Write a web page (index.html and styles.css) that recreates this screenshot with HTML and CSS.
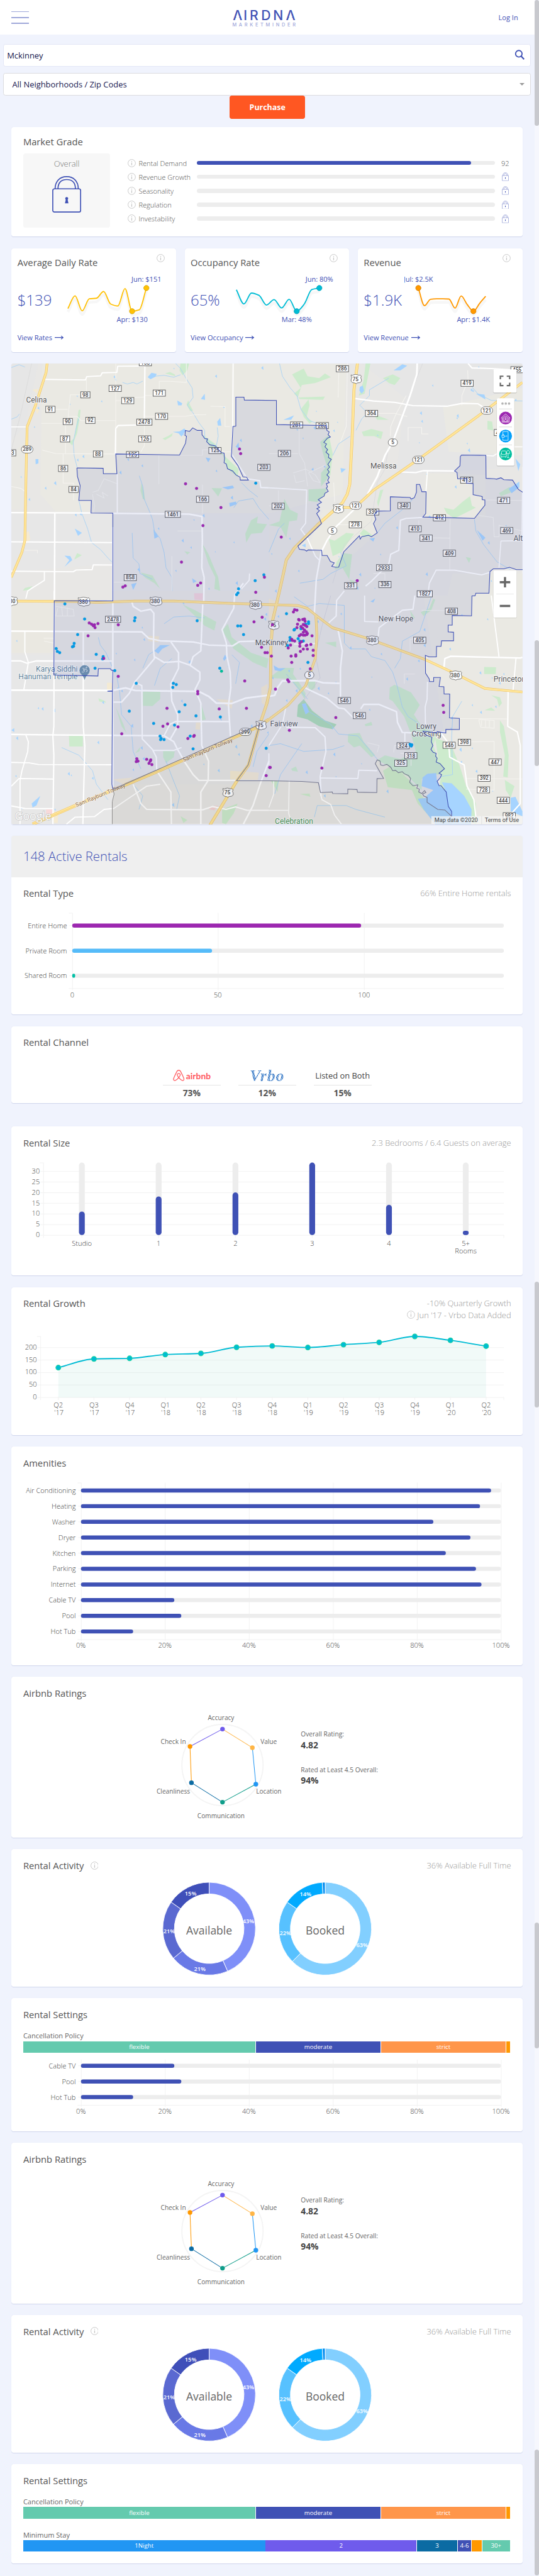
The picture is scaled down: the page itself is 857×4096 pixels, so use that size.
FILE: index.html
```html
<!DOCTYPE html>
<html lang="en">
<head>
<meta charset="utf-8">
<title>AirDNA MarketMinder</title>
<link rel="stylesheet" href="styles.css">
</head>
<body>
<svg class="defs" aria-hidden="true">
  <symbol id="info" viewBox="0 0 14 14"><circle cx="7" cy="7" r="6.4" fill="none" stroke="currentColor"/><path d="M7 6v4.6M7 3.2v1.5" stroke="currentColor" stroke-width="1.3"/></symbol>
  <symbol id="lock" viewBox="0 0 50 63"><g fill="none" stroke="currentColor" stroke-width="1.8"><rect x="1" y="22" width="48" height="40" rx="3"/><path d="M5 22C5 9 13 1 25 1s20 8 20 21M10 22c0-10 5-16 15-16s15 6 15 16"/></g><path d="M25 36a2.6 2.6 0 0 1 1.6 4.6L28 47h-6l1.400-6.400A2.600 2.600 0 0 1 25 36z" fill="currentColor"/></symbol>
  <symbol id="lock-sm" viewBox="0 0 12 15"><path d="M.6 5.600h10.800v8.800H.6zM1.700 5.600C1.700 2.500 3.300.7 6 .7s4.300 1.800 4.300 4.900M3.400 5.600C3.400 3.500 4.300 2.300 6 2.300s2.600 1.200 2.600 3.300" fill="none" stroke="currentColor" stroke-width=".9"/><path d="M6 8.800v2.400" stroke="#3f51b5" stroke-width="1.200"/></symbol>
  <symbol id="arrow" viewBox="0 0 16 8"><path d="M0 4h14M11 1.200l3.500 2.800L11 6.800" fill="none" stroke="currentColor" stroke-width="1.300"/></symbol>
</svg>
<div class="page">
  <header class="topbar">
    <div class="burger"><i></i><i></i><i></i></div>
    <svg class="logo" viewBox="0 0 112 32" width="112" height="32">
      <text x="10.700 24 38.800 59.500 80.500 102" y="20.500" class="logo-main">AIRDNA</text>
      <path d="M8 13.200h5.400v4.600H8zM99.300 13.200h5.400v4.600h-5.400z" fill="#fff"/>
      <text x="1.500" y="31.800" class="logo-sub" textLength="109">MARKETMINDER</text>
    </svg>
    <a class="login">Log In</a>
  </header>

  <div class="search"><span>Mckinney</span>
    <svg width="18" height="18" viewBox="0 0 18 18"><circle cx="7.500" cy="7" r="5.600" fill="none" stroke="#3f51b5" stroke-width="2"/><path d="M11.500 11l5 5.500" stroke="#3f51b5" stroke-width="2.400"/></svg>
  </div>
  <div class="select"><span>All Neighborhoods / Zip Codes</span><i class="caret"></i></div>
  <button class="purchase">Purchase</button>

  <main class="cards">
    <section class="card grade">
      <h2>Market Grade</h2>
      <div class="grade-body">
        <div class="overall"><span>Overall</span><svg width="50" height="63"><use href="#lock"/></svg></div>
        <div class="grade-rows">
          <div class="grow"><svg class="inf"><use href="#info"/></svg><span>Rental Demand</span><div class="track"><b class="fill92"></b></div><em>92</em></div>
          <div class="grow"><svg class="inf"><use href="#info"/></svg><span>Revenue Growth</span><div class="track"></div><svg class="lk"><use href="#lock-sm"/></svg></div>
          <div class="grow"><svg class="inf"><use href="#info"/></svg><span>Seasonality</span><div class="track"></div><svg class="lk"><use href="#lock-sm"/></svg></div>
          <div class="grow"><svg class="inf"><use href="#info"/></svg><span>Regulation</span><div class="track"></div><svg class="lk"><use href="#lock-sm"/></svg></div>
          <div class="grow"><svg class="inf"><use href="#info"/></svg><span>Investability</span><div class="track"></div><svg class="lk"><use href="#lock-sm"/></svg></div>
        </div>
      </div>
    </section>

    <div class="stats">
      <section class="card stat"><div class="stat-head"><h2>Average Daily Rate</h2><svg class="inf"><use href="#info"/></svg></div>
        <div class="stat-body"><strong>$139</strong><svg class="spark" id="spark1"></svg></div>
        <a>View Rates <svg width="16" height="8"><use href="#arrow"/></svg></a></section>
      <section class="card stat"><div class="stat-head"><h2>Occupancy Rate</h2><svg class="inf"><use href="#info"/></svg></div>
        <div class="stat-body"><strong>65%</strong><svg class="spark" id="spark2"></svg></div>
        <a>View Occupancy <svg width="16" height="8"><use href="#arrow"/></svg></a></section>
      <section class="card stat"><div class="stat-head"><h2>Revenue</h2><svg class="inf"><use href="#info"/></svg></div>
        <div class="stat-body"><strong>$1.9K</strong><svg class="spark" id="spark3"></svg></div>
        <a>View Revenue <svg width="16" height="8"><use href="#arrow"/></svg></a></section>
    </div>

    <section class="card map"><svg id="map" viewBox="60 24 2643 2382" width="881" height="794"></svg></section>

    <section class="card">
      <div class="banner">148 Active Rentals</div>
      <div class="head"><h2>Rental Type</h2><p>66% Entire Home rentals</p></div>
      <svg id="type" viewBox="20 1569 881 181" width="881" height="181"></svg>
    </section>

    <section class="card channel">
      <div class="head"><h2>Rental Channel</h2></div>
      <div class="channels">
        <div><span class="brand"><svg width="20" height="21" viewBox="0 0 20 21"><path d="M10 13.500c-2-2.400-2.900-4-2.500-5.500.7-2.300 4.300-2.300 5 0 .4 1.500-.5 3.100-2.500 5.500-4.500 6-9.300 6.500-9 2.300.1-1.300 5-11.500 6.200-13.500C8.400.3 11.600.3 12.800 2.300 14 4.300 18.900 14.500 19 15.800c.3 4.200-4.500 3.700-9-2.300z" fill="none" stroke="#ff5a5f" stroke-width="1.400"/></svg><b class="airbnb">airbnb</b></span><strong>73%</strong></div>
        <div><span class="brand"><b class="vrbo">Vrbo</b></span><strong>12%</strong></div>
        <div><span class="brand">Listed on Both</span><strong>15%</strong></div>
      </div>
    </section>

    <section class="card">
      <div class="head"><h2>Rental Size</h2><p>2.3 Bedrooms / 6.4 Guests on average</p></div>
      <svg id="size" viewBox="20 1999 881 201" width="881" height="201"></svg>
    </section>

    <section class="card">
      <div class="head"><h2>Rental Growth</h2><p class="two">-10% Quarterly Growth<br><svg class="inf"><use href="#info"/></svg> Jun '17 - Vrbo Data Added</p></div>
      <svg id="growth" viewBox="20 2276 881 199" width="881" height="199"></svg>
    </section>

    <section class="card">
      <div class="head"><h2>Amenities</h2></div>
      <svg id="amenities" viewBox="20 2551 881 321" width="881" height="321"></svg>
    </section>

    <section class="card"><div class="head"><h2>Airbnb Ratings</h2></div><svg class="ratings" viewBox="20 2948 881 221" width="881" height="221"></svg></section>
    <section class="card"><div class="head"><h2>Rental Activity <svg class="inf"><use href="#info"/></svg></h2><p>36% Available Full Time</p></div><svg class="activity" viewBox="20 3245 881 181" width="881" height="181"></svg></section>

    <section class="card settings">
      <div class="head"><h2>Rental Settings</h2></div>
      <label>Cancellation Policy</label>
      <div class="stack policy"><i class="green">flexible</i><i class="blue">moderate</i><i class="orange">strict</i><i class="amber"></i></div>
      <svg id="partial" viewBox="20 3540 881 135" width="881" height="135"></svg>
    </section>

    <section class="card"><div class="head"><h2>Airbnb Ratings</h2></div><svg class="ratings" viewBox="20 2948 881 221" width="881" height="221"></svg></section>
    <section class="card"><div class="head"><h2>Rental Activity <svg class="inf"><use href="#info"/></svg></h2><p>36% Available Full Time</p></div><svg class="activity" viewBox="20 3245 881 181" width="881" height="181"></svg></section>

    <section class="card settings last">
      <div class="head"><h2>Rental Settings</h2></div>
      <label>Cancellation Policy</label>
      <div class="stack policy"><i class="green">flexible</i><i class="blue">moderate</i><i class="orange">strict</i><i class="amber"></i></div>
      <label class="second">Minimum Stay</label>
      <div class="stack stay"><i class="sky">1Night</i><i class="violet">2</i><i class="teal">3</i><i class="blue">4-6</i><i class="amber"></i><i class="green">30+</i></div>
    </section>
  </main>
  <aside class="rail"><i class="t1"></i><i class="t2"></i><i class="t3"></i><i class="t4"></i><i class="t5"></i></aside>
</div>
<script src="script.js"></script>
</body>
</html>
```
FILE: styles.css
```css
* { box-sizing: border-box; }
html { background: #f0f3fd; overflow: hidden; }
body { margin: 0; zoom: .9224; font-family: "Open Sans", sans-serif; color: #555; }
.defs { position: absolute; width: 0; height: 0; }
.page { position: relative; width: 929px; height: 4440px; overflow: hidden; background: #f0f3fd; }
svg { display: block; }
h2 { margin: 0; font-size: 16px; font-weight: 400; line-height: 22px; color: #555; }
i, em { font-style: normal; }

.topbar { width: 921px; height: 60px; background: #fff; display: flex; justify-content: space-between; align-items: center; padding: 0 28px 0 20px; }
.burger { width: 30px; display: grid; gap: 8px; }
.burger i { height: 2px; background: #9fa8da; }
.logo { margin-left: 1px; overflow: visible; }
.logo-main { font: 500 23px Inter, sans-serif; fill: #3f51b5; text-anchor: middle; }
.logo-sub { font: 500 8px Inter, sans-serif; fill: #9fa8da; }
.login { font-size: 12px; color: #3f51b5; }

.search, .select { width: 910px; height: 39px; margin-left: 5px; background: #fff; border: 1px solid #e3e6f6; border-radius: 4px; display: flex; align-items: center; justify-content: space-between; color: #16164f; font-size: 14px; font-weight: 500; }
.search { margin-top: 15.500px; padding: 0 9px 0 6px; }
.select { margin-top: 11px; padding: 0 10px 0 15px; border-color: #dcdcdf; }
.caret { border: 5px solid transparent; border-top: 5px solid #999; border-bottom: 0; }
.purchase { display: block; width: 130px; height: 40px; margin: 0 0 0 396px; border: 0; border-radius: 4px; background: #ff5722; color: #fff; font: 700 13.500px "Open Sans", sans-serif; }

.cards { margin: 14.500px 0 0 20px; width: 881px; display: flex; flex-direction: column; gap: 20px; }
.card { background: #fff; border-radius: 4px; box-shadow: 0 1px 1px #cfd5ec; }
.inf { width: 14px; height: 14px; color: #c4c4c4; flex: none; }

.grade { height: 189px; padding: 14px 20px; }
.grade-body { display: flex; margin-top: 10px; }
.overall { width: 150px; height: 127px; background: #f7f7f7; border-radius: 4px; display: flex; flex-direction: column; align-items: center; gap: 12px; padding-top: 7px; font-size: 14px; font-weight: 300; line-height: 20px; color: #777; }
.overall svg { color: #3f51b5; }
.grade-rows { padding: 4px 0 0 30px; width: 691px; }
.grow { height: 24px; display: flex; align-items: center; font-size: 12px; font-weight: 300; color: #555; }
.grow span { width: 100px; margin-left: 5px; }
.track { width: 514px; height: 7px; border-radius: 4px; background: #ededed; }
.track b { display: block; height: 7px; border-radius: 4px; background: #3f51b5; }
.fill92 { width: 92%; }
.grow em { margin-left: 11px; }
.lk { width: 12px; height: 15px; margin-left: 12px; color: #9fa8da; }

.stats { display: grid; grid-template-columns: repeat(3, 283.500px); gap: 15px; }
.stat { height: 179px; padding: 10px 10px 0; }
.stat-head { display: flex; justify-content: space-between; height: 28px; }
.stat-head h2 { padding-top: 3px; }
.stat-head .inf { margin-right: 10px; }
.stat-body { display: flex; height: 104px; }
.stat-body strong { font-size: 26px; font-weight: 300; color: #3f51b5; line-height: 36px; padding-top: 33px; width: 70px; white-space: nowrap; }
.spark { width: 190px; height: 104px; flex: none; }
.stat a { display: flex; align-items: center; gap: 4px; height: 24px; font-size: 12px; color: #3f51b5; }

.map { height: 794px; overflow: hidden; }
.banner { height: 71px; padding-left: 20px; line-height: 71px; font-size: 22px; font-weight: 300; color: #3f51b5; background: #efefef; border-radius: 4px 4px 0 0; }
.head { height: 56px; padding: 17px 20px 0; display: flex; justify-content: space-between; align-items: flex-start; }
.head h2 { display: flex; align-items: center; gap: 11px; }
.head p { margin: 0; font-size: 14px; font-weight: 300; color: #999; line-height: 22px; text-align: right; }
.head .two { line-height: 20px; padding-top: 1px; }
.two .inf { display: inline-block; vertical-align: -1px; }

.channel { height: 133px; margin-bottom: 20px; }
.channels { display: grid; grid-template-columns: repeat(3, 100px); gap: 30px; justify-content: center; padding-top: 14px; }
.channels div { text-align: center; }
.brand { display: flex; align-items: center; justify-content: center; gap: 3px; height: 32px; font-size: 14px; color: #444; border-bottom: 1px solid #e5e5e5; white-space: nowrap; }
.airbnb { font: 700 15px Lato, sans-serif; color: #ff5a5f; }
.vrbo { padding: 0 3px; font: italic 700 28px/30px "Liberation Serif", serif; letter-spacing: 1px; color: transparent; background: repeating-linear-gradient(65deg, #3c74bd 0 1.400px, #a4cdf3 1.400px 2.600px); -webkit-background-clip: text; background-clip: text; }
.channels strong { display: block; font-size: 15px; font-weight: 700; line-height: 26px; }

.settings { height: 229px; }
.settings.last { height: 171px; }
label { display: block; margin-left: 20px; height: 18px; font-size: 12px; line-height: 18px; color: #666; }
label.second { margin-top: 20px; }
.stack { display: grid; gap: 1px; width: 839px; height: 20px; margin-left: 20px; }
.policy { grid-template-columns: 400px 215px 214.500px 6.500px; }
.stay { grid-template-columns: 417px 260px 69px 23.500px 17px 47.500px; margin-top: -1px; }
.stack i { display: flex; align-items: center; justify-content: center; font-size: 10.500px; color: #fff; }
.green { background: #64caae; }
.blue { background: #3f51b5; }
.orange { background: #ff964a; }
.amber { background: #ff9800; }
.sky { background: #2196f3; }
.violet { background: #6f5bec; }
.teal { background: #0b6ba3; }

.rail { position: absolute; left: 921px; top: 0; width: 8px; height: 4440px; background: #f6f7fd; }
.rail i { position: absolute; left: 0; width: 8px; height: 217px; border-radius: 4px; background: #c8c9ce; }
.rail .t1 { top: 0; }
.rail .t2 { top: 1104px; }
.rail .t3 { top: 2209px; }
.rail .t4 { top: 3314px; }
.rail .t5 { top: 4223px; }

.lbl { font: 300 12px "Open Sans", sans-serif; fill: #444; }
.small { font: 400 11px "Open Sans", sans-serif; fill: #666; }
.big { font: 700 15px "Open Sans", sans-serif; fill: #444; }
.hole { font: 400 19px "Open Sans", sans-serif; fill: #666; }
.pct { font: 600 10px "Open Sans", sans-serif; fill: #fff; }
.tip { font: 400 12px "Open Sans", sans-serif; fill: #3f51b5; }
.grid { stroke: #f1f1f1; stroke-width: 1; }
.road-tag { font: 500 27px Roboto, sans-serif; fill: #444; }
.place { font: 400 39px Roboto, sans-serif; fill: #555; stroke: #fff; stroke-width: 5; paint-order: stroke; stroke-linejoin: round; }
.place.poi { fill: #5d7f99; }
.place.park { fill: #4b9560; }
.place.toll { font-size: 29px; fill: #8b6331; stroke-width: 4; }
.legal { font: 400 30px Roboto, sans-serif; fill: #444; }
.google { font: 500 58px "Open Sans", sans-serif; fill: #fff; stroke: #aaa; stroke-width: 3; paint-order: stroke; letter-spacing: -2px; }
```
FILE: script.js
```js
const $ = s => document.querySelector(s);
const r1 = n => Math.round(n * 10) / 10;
const text = (x, y, s, anchor = 'middle', cls = 'lbl', size = 12) =>
  `<text x="${x}" y="${r1(y + size * 0.36)}" text-anchor="${anchor}" class="${cls}">${s}</text>`;
const line = (x1, y1, x2, y2) => `<path class="grid" d="M${x1} ${y1}L${x2} ${y2}"/>`;
const bar = (x, y, w, h, fill) => `<rect x="${x}" y="${y}" width="${w}" height="${h}" rx="${Math.min(w, h) / 2}" fill="${fill}"/>`;

// Monotone cubic through a list of points
function curve(p) {
  const n = p.length, m = [], d = [];
  for (let i = 0; i < n - 1; i++) m.push((p[i + 1][1] - p[i][1]) / (p[i + 1][0] - p[i][0]));
  for (let i = 0; i < n; i++) {
    if (i === 0) d.push(m[0]);
    else if (i === n - 1) d.push(m[n - 2]);
    else d.push(m[i - 1] * m[i] <= 0 ? 0 : 2 * m[i - 1] * m[i] / (m[i - 1] + m[i]));
  }
  let s = `M${r1(p[0][0])} ${r1(p[0][1])}`;
  for (let i = 0; i < n - 1; i++) {
    const h = (p[i + 1][0] - p[i][0]) / 3;
    s += `C${r1(p[i][0] + h)} ${r1(p[i][1] + d[i] * h)} ${r1(p[i + 1][0] - h)} ${r1(p[i + 1][1] - d[i + 1] * h)} ${r1(p[i + 1][0])} ${r1(p[i + 1][1])}`;
  }
  return s;
}

// Sparklines
function spark(id, left, color, rim, ys, x0, step, hi, lo, hiText, loText) {
  const el = $(id);
  el.setAttribute('viewBox', `${left} 467 190 104`);
  const pts = ys.map((y, i) => [x0 + i * step, 400 + y / 3]);
  const d = curve(pts);
  const dot = i => `<circle cx="${pts[i][0]}" cy="${pts[i][1]}" r="4.500" fill="${color}" stroke="${rim}"/>`;
  el.innerHTML = `<path d="${d}" transform="translate(0 6)" fill="none" stroke="#000" stroke-opacity=".03" stroke-width="5"/>
    <path d="${d}" fill="none" stroke="${color}" stroke-width="2"/>${dot(hi)}${dot(lo)}` +
    text(pts[hi][0], 482, hiText, 'middle', 'tip') + text(pts[lo][0], 552, loText, 'middle', 'tip');
}
spark('#spark1', 100, '#ffc107', '#dba800', [398, 332, 410, 348, 345, 310, 375, 385, 295, 412, 405, 292], 117.3, 12.3, 11, 9, 'Jun: $151', 'Apr: $130');
spark('#spark2', 398.5, '#00bcd4', '#00a3bb', [301, 374, 318, 330, 380, 352, 395, 350, 412, 375, 300, 292], 407, 13, 11, 8, 'Jun: 80%', 'Mar: 48%');
spark('#spark3', 697, '#ff9800', '#db8200', [292, 383, 350, 348, 348, 349, 396, 333, 378, 412, 372, 335], 721, 10.55, 0, 9, 'Jul: $2.5K', 'Apr: $1.4K');

// Horizontal bars
function hbars(id, o) {
  let s = '';
  o.ticks.forEach(([x, t]) => { s += line(x + .5, o.top, x + .5, o.bottom + 3) + text(x, o.axis, t); });
  s += line(o.x - 6, o.bottom + .5, o.right, o.bottom + .5);
  if (o.cap) s += line(o.x - 6, o.top + .5, o.x, o.top + .5);
  o.rows.forEach(([label, end, fill], i) => {
    const y = o.y + i * o.step;
    s += line(o.x - 5, y, o.x, y) + bar(o.x, y - 3.5, o.right - o.x, 7, '#ededed') + bar(o.x, y - 3.5, end - o.x, 7, fill || '#3f51b5') +
      text(o.labelX, y, label, 'end');
  });
  $(id).innerHTML = s;
}
hbars('#type', { x: 125, right: 869, top: 1575, bottom: 1705, axis: 1716, y: 1597, step: 43.2, labelX: 116, cap: true,
  ticks: [[125, '0'], [376, '50'], [628, '100']],
  rows: [['Entire Home', 623, '#9c27b0'], ['Private Room', 366, '#55bbf9'], ['Shared Room', 130, '#00bfa5']] });
const pctTicks = [0, 20, 40, 60, 80, 100].map((v, i) => [140 + i * 144.8, v + '%']);
hbars('#amenities', { x: 140, right: 864, top: 2557, bottom: 2827, axis: 2837.5, y: 2570.5, step: 27, labelX: 131, cap: true, ticks: pctTicks,
  rows: [['Air Conditioning', 847], ['Heating', 828], ['Washer', 747.5], ['Dryer', 811.5], ['Kitchen', 769], ['Parking', 821], ['Internet', 830.5], ['Cable TV', 301], ['Pool', 313], ['Hot Tub', 230]] });
hbars('#partial', { x: 140, right: 864, top: 3552, bottom: 3630, axis: 3640.5, y: 3562.5, step: 27, labelX: 131, ticks: pctTicks,
  rows: [['Cable TV', 301], ['Pool', 313], ['Hot Tub', 230]] });

// Rental size columns
(() => {
  let s = line(75.5, 2005, 75.5, 2135) + line(69, 2005.5, 75, 2005.5) + line(869, 2130, 869, 2135);
  for (let i = 0; i < 7; i++) s += line(70, r1(2130.3 - i * 18.35), 869, r1(2130.3 - i * 18.35)) + text(69, 2129.5 - i * 18.35, i * 5, 'end');
  [['Studio', 2089.5], ['1', 2063.5], ['2', 2056.5], ['3', 2005], ['4', 2078], ['5+', 2122.5]].forEach(([t, top], i) => {
    const x = 141.6 + i * 132.35;
    s += line(x, 2130, x, 2135) + bar(x - 5, 2005, 10, 125, '#ededed') + bar(x - 5, top, 10, 2130 - top, '#3f51b5') + text(x, 2144, t);
  });
  $('#size').innerHTML = s + text(803.4, 2157, 'Rooms');
})();

// Rental growth line
(() => {
  const ys = [2359, 2344, 2343, 2336.5, 2334.5, 2324, 2321.7, 2324.3, 2319.5, 2315.5, 2305.3, 2312, 2322];
  const pts = ys.map((y, i) => [101 + i * 61.45, y]);
  const q = ["Q2 '17", "Q3 '17", "Q4 '17", "Q1 '18", "Q2 '18", "Q3 '18", "Q4 '18", "Q1 '19", "Q2 '19", "Q3 '19", "Q4 '19", "Q1 '20", "Q2 '20"];
  let s = line(70.5, 2305, 70.5, 2415) + line(64, 2305.5, 70, 2305.5) + line(869, 2410, 869, 2415);
  for (let i = 0; i < 5; i++) s += line(65, 2410.5 - i * 21.5, 869, 2410.5 - i * 21.5) + text(64, 2409.5 - i * 21.5, i * 50, 'end');
  const d = curve(pts);
  s += `<path d="${d}L838.4 2410.5L101 2410.5z" fill="#64caae" fill-opacity=".09"/><path d="${d}" fill="none" stroke="#00bcd4" stroke-width="2"/>`;
  pts.forEach(([x, y], i) => {
    const [a, b] = q[i].split(' ');
    s += line(x, 2410, x, 2415) + `<circle cx="${x}" cy="${y}" r="4.2" fill="#00bcd4" stroke="#1dd1a1" stroke-width="1.3"/>` + text(x, 2423, a) + text(x + 1, 2436, b);
  });
  $('#growth').innerHTML = s;
})();

// Rating radar
(() => {
  const p = [[384, 2982, '#6f5bec'], [435.5, 3014, '#ffb545'], [441.5, 3077, '#2196f3'], [384, 3108, '#0f9d8a'], [330.5, 3074.5, '#0b6ba3'], [328, 3012, '#ff9800']];
  const edge = ['#ffb545', '#2196f3', '#0f9d8a', '#0b6ba3', '#ff9800', '#6f5bec'];
  let s = '<circle cx="384" cy="3044" r="70" fill="none" stroke="#f4f4f4" stroke-width="2"/>';
  p.forEach((a, i) => { const b = p[(i + 1) % 6]; s += `<path d="M${a[0]} ${a[1]}L${b[0]} ${b[1]}" stroke="${edge[i]}" stroke-width="1.1"/>`; });
  p.forEach(a => { s += `<circle cx="${a[0]}" cy="${a[1]}" r="4" fill="${a[2]}"/>`; });
  [[381.5, 2962, 'Accuracy', 'middle'], [449.5, 3004, 'Value', 'start'], [442, 3089, 'Location', 'start'], [381.5, 3132, 'Communication', 'middle'], [328, 3089, 'Cleanliness', 'end'], [321, 3004, 'Check In', 'end'],
    [519, 2991, 'Overall Rating:', 'start'], [519, 3052, 'Rated at Least 4.5 Overall:', 'start']].forEach(a => { s += text(a[0], a[1], a[2], a[3], 'small', 11); });
  s += text(519, 3009, '4.82', 'start', 'big', 16) + text(519, 3070, '94%', 'start', 'big', 16);
  document.querySelectorAll('.ratings').forEach(e => { e.innerHTML = s; });
})();

// Donuts
(() => {
  const cy = 3326;
  const donut = (cx, name, parts) => {
    let a = 0, s = '';
    const at = (r, t) => `${r1(cx + r * Math.sin(t))} ${r1(cy - r * Math.cos(t))}`;
    parts.forEach(([v, fill, show]) => {
      const b = a + v / 100 * 2 * Math.PI, big = v > 50 ? 1 : 0, m = (a + b) / 2;
      s += `<path d="M${at(80, a)}A80 80 0 ${big} 1 ${at(80, b)}L${at(60, b)}A60 60 0 ${big} 0 ${at(60, a)}z" fill="${fill}" stroke="#fff"/>`;
      if (show) s += text(r1(cx + 69 * Math.sin(m)), cy - 70 * Math.cos(m) + 1.5, show, 'middle', 'pct', 10);
      a = b;
    });
    return s + text(cx, cy + 3, name, 'middle', 'hole', 19);
  };
  const s = donut(361, 'Available', [[43.5, '#7f8ff8', '43%'], [20.5, '#6979e6', '21%'], [20.7, '#5a69d1', '21%'], [15.3, '#3f4fb9', '15%']]) +
    donut(561, 'Booked', [[62.5, '#82cfff', '63%'], [22.2, '#57c1ff', '22%'], [14.3, '#00aaff', '14%'], [1, '#0a8ff0', '']]);
  document.querySelectorAll('.activity').forEach(e => { e.innerHTML = s; });
})();

// Map, drawn as four tiles (nw, ne, sw, se) that share one canvas
(() => {
  const tile = { nw: [0, 0], ne: [1392, 0], sw: [0, 1200], se: [1392, 1200] };
  const pts = (t, list) => list.trim().split(/\s+/).map(p => { const [x, y] = p.split(',').map(Number); return (x + tile[t][0]) + ' ' + (y + tile[t][1]); });
  const path = (t, list) => 'M' + pts(t, list).join('L');
  const stroke = (t, list, color, w) => `<path d="${path(t, list)}" fill="none" stroke="${color}" stroke-width="${w}" stroke-linejoin="round"/>`;
  const area = (t, list, color) => `<path d="${path(t, list)}Z" fill="${color}"/>`;
  let s = '<rect x="60" y="24" width="2643" height="2382" fill="#e8e7e5"/>';

  // Terrain
  [['nw', '220,24 1392,24 1392,800 585,790 290,790 210,700 215,300', '#eae9e3'], ['nw', '60,500 130,420 135,780 60,780', '#e9e8e3'], ['nw', '60,24 200,24 130,350 60,420', '#e6e6e6'],
    ['ne', '0,24 400,24 380,700 0,800', '#eae9e3'], ['ne', '480,24 1311,24 1311,560 660,600 700,200', '#e6e6e6'], ['ne', '900,250 1311,150 1311,500 930,480', '#eae9e3'], ['ne', '810,590 1120,600 1120,820 800,820', '#eae9e3'], ['ne', '280,780 560,780 540,920 360,1080 200,990', '#eae9e3'],
    ['nw', '585,800 1392,800 1392,1200 585,1200', '#e7e7e7'], ['nw', '60,800 585,800 585,1060 60,1100', '#e7e7e7'], ['sw', '60,50 280,50 280,320 60,320', '#eae8e1'], ['sw', '60,330 580,330 580,2400 60,2400', '#e7e7e7'], ['sw', '585,50 1392,60 1392,1000 585,1000', '#e6e6e6'],
    ['se', '800,24 1311,24 1311,1206 950,1206 900,700', '#eae9e4'], ['se', '950,-90 1311,-90 1311,330 850,330', '#eae9e3']].forEach(a => { s += area(...a); });

  // Parks
  const g = '#cdebcd';
  [['nw', '935,24 980,24 970,60 945,85 930,60'], ['nw', '855,75 880,68 905,80 908,90 880,82'], ['nw', '966,235 975,215 985,240 1000,268 985,270'], ['nw', '842,412 870,400 895,383 890,400 855,420'], ['nw', '408,265 418,262 415,300 400,385 375,448 360,432 385,410'], ['nw', '385,1038 400,1005 425,1015 400,1030'],
    ['nw', '1046,390 1115,440 1160,500 1235,570 1230,610 1175,565 1155,500 1090,455'], ['nw', '733,640 745,680 752,730 740,725 728,680'], ['nw', '1095,668 1150,670 1130,712'], ['nw', '1300,835 1335,815 1330,850 1382,855 1355,900 1300,905 1275,950 1270,905'], ['nw', '955,995 985,1000 970,1012'], ['nw', '1045,950 1080,1010 1100,1060 1130,1130 1140,1200 1110,1190 1115,1130 1080,1060'],
    ['nw', '730,1105 790,1120 830,1190 800,1160 750,1130'], ['nw', '130,1185 170,1175 150,1195 120,1198'],
    ['ne', '120,80 180,50 200,90 260,100 290,75 320,95 240,125 170,135 150,200 290,195 280,212 160,208 130,180 165,150'], ['ne', '165,260 205,210 210,240 195,300 225,325 210,335 180,300'], ['ne', '500,24 525,24 495,180 465,190 490,110'], ['ne', '590,100 640,80 680,100 650,135 620,125'], ['ne', '480,378 530,362 590,378 580,415 545,400 490,400'], ['ne', '540,285 620,315 560,315'], ['ne', '265,430 310,395 330,490 318,600 270,660 270,590 300,555 280,490'],
    ['ne', '205,675 300,670 290,700 250,740 205,735'], ['ne', '80,725 110,780 150,800 145,835 105,840 90,925 60,870 0,860 55,840'], ['ne', '575,680 592,675 565,765 560,740'], ['ne', '905,770 955,780 1000,740 1040,710 1050,760 1070,770 1010,800 960,825 920,800'], ['ne', '310,930 340,940 400,900 440,905 375,1000 330,1020'], ['ne', '385,1005 430,1010 415,1140 445,1150 430,1165 380,1080 340,1090 350,1050'], ['ne', '1130,320 1155,325 1160,370 1130,365'], ['ne', '1190,695 1240,665 1265,665 1255,690 1200,710'], ['ne', '1018,1025 1045,1030 1035,1055'], ['ne', '470,905 490,880 540,915 490,920'],
    ['sw', '741,520 830,522 830,560 790,596 741,594'], ['sw', '358,750 430,750 430,805 360,805'], ['sw', '845,825 905,830 900,860 860,890 845,860'], ['sw', '1150,205 1180,170 1200,240 1300,320 1390,350 1380,400 1310,370 1210,300'], ['sw', '945,70 1010,100 1120,160 1110,205 1060,180 1000,120'], ['sw', '600,600 640,690 655,735 630,700'], ['sw', '1042,585 1066,665 1045,670'], ['sw', '1150,1130 1230,1100 1210,1150 1170,1206 1150,1200'], ['sw', '510,555 545,570 550,578 515,572'], ['sw', '935,1165 970,1185 950,1200'], ['sw', '700,840 728,806 722,830'],
    ['se', '625,500 650,485 735,525 780,590 750,640 790,700 870,740 850,800 880,880 905,920 880,950 820,945 790,975 790,1030 720,960 560,875 600,850 680,870 760,830 735,740 700,650 640,570 622,560'], ['se', '860,760 940,790 985,900 1020,1010 1070,1100 1070,1206 870,1100 890,960'], ['se', '640,900 750,1000 820,1100 830,1166 770,1100 740,1030 615,1015 590,930'],
    ['se', '410,740 470,735 490,780 550,850 530,860 470,800 440,810 408,780'], ['se', '70,398 130,398 125,430 160,480 190,530 185,560 160,520 110,455 0,450'], ['se', '190,460 240,465 240,500 215,520'], ['se', '290,268 348,262 348,292'], ['se', '495,690 530,677 535,695 500,700'], ['se', '1113,393 1175,395 1173,430 1113,430'], ['se', '1150,540 1195,550 1205,580 1190,600 1180,560'], ['se', '1195,670 1215,700 1240,850 1235,965 1212,960 1220,850 1195,730'], ['se', '1220,978 1270,1010 1250,1070 1225,1030'], ['se', '1115,617 1150,603 1170,620'], ['se', '115,920 140,908 150,935 120,930'], ['se', '730,100 755,140 740,145'], ['se', '785,110 830,90 850,40 860,45 840,100 800,130'], ['se', '160,1050 210,1048 215,1065'], ['se', '10,980 50,985 45,1040']].forEach(([t, l]) => { s += area(t, l, g); });
  s += area('se', '180,560 225,620 290,670 350,690 330,715 260,700 200,665 145,650 150,590', '#aedcb8');

  // Commercial blocks
  [['nw', '135,900 150,890 158,935 130,960'], ['nw', '170,160 200,155 195,180'], ['nw', '180,260 205,260 195,285'], ['sw', '555,475 583,475 583,515 555,515'], ['sw', '760,232 825,235 820,265 770,260'], ['sw', '1192,930 1340,940 1335,978 1192,975'], ['sw', '588,975 690,965 640,1000'], ['sw', '1352,500 1385,480 1385,600 1355,580'], ['sw', '1015,680 1040,680 1035,718 1012,715'], ['sw', '1120,560 1205,565 1200,610'], ['se', '0,40 50,60 20,70 25,150 0,150'], ['sw', '275,1145 303,1140 300,1200 280,1200']].forEach(([t, l]) => { s += area(t, l, '#f4ead3'); });
  s += area('sw', '240,1130 273,1130 272,1165 240,1160', '#f8d9d9') + area('sw', '1005,12 1050,12 1050,48 1007,45', '#f1d3dc') + area('sw', '1085,1115 1130,1110 1110,1135 1085,1130', '#f4d4d4');

  // Water
  const w = '#a6d4ff';
  [['nw', '895,378 930,375 955,360 962,370 940,402 925,385'], ['nw', '765,95 785,72 812,78 805,92 780,105'], ['nw', '1125,325 1140,305 1146,345 1128,345'], ['nw', '1150,665 1205,655 1212,668 1180,675'], ['nw', '1187,745 1222,738 1225,752 1190,765'], ['nw', '795,880 820,920 800,930'], ['nw', '388,878 425,900 405,915'], ['nw', '335,1018 365,1020 375,1040 335,1075 360,1040'], ['nw', '185,518 200,518 200,540 186,545'], ['nw', '918,215 944,230 940,240 922,240'], ['nw', '1040,208 1060,180 1062,212'], ['nw', '680,1165 708,1158 690,1195'], ['nw', '995,1135 1018,1150 1000,1160'], ['nw', '1065,510 1090,515 1078,535'], ['nw', '1220,455 1235,432 1238,465'],
    ['ne', '470,145 485,138 492,165 480,180 468,165'], ['ne', '645,60 690,28 715,35 680,60'], ['ne', '1070,180 1115,185 1120,210'], ['ne', '1240,672 1295,635 1295,665 1255,695'], ['ne', '1275,515 1300,545 1290,580'], ['ne', '75,315 130,292 115,315'], ['ne', '370,565 398,570 375,590'], ['ne', '1075,885 1120,925 1105,940'], ['ne', '170,965 190,955 190,975'], ['ne', '520,930 548,925 540,945'],
    ['sw', '800,310 830,280 880,280 840,300 820,325'], ['sw', '1155,350 1165,330 1175,345 1160,362'], ['sw', '60,720 75,710 75,730'], ['sw', '165,1100 210,1060 190,1110 170,1120'],
    ['se', '820,945 865,942 868,975 880,1007 917,1040 928,1115 945,1140 940,1166 900,1135 873,1130 818,1093 815,1060 850,1030 790,1010 795,965'], ['se', '895,990 945,995 1010,1060 1048,1130 1045,1206 945,1206 945,1140 928,1115 917,1040'], ['se', '770,1075 820,1070 820,1093 873,1130 910,1133 945,1166 945,1206 860,1206 800,1130'], ['se', '1250,1070 1275,1065 1311,1140 1311,1166 1250,1140'], ['se', '170,585 190,580 208,625 190,640'], ['se', '25,385 50,400 85,400 60,415 30,410'], ['se', '525,55 550,40 540,60']].forEach(([t, l]) => { s += area(t, l, w); });
  [['nw', '910,24 935,50 960,95 995,150 1000,200 970,240 1000,280 1030,330 1060,370 1060,410 1115,450'], ['nw', '635,122 660,130 690,122 710,130 740,115'], ['nw', '800,90 850,85 900,95 935,82'], ['nw', '410,300 395,360 380,430 385,500 400,560'], ['nw', '410,735 425,800 455,880 475,950 520,985 560,1030 585,1055'], ['nw', '60,312 90,300 102,285'], ['nw', '60,45 100,30 130,42'], ['nw', '722,605 740,660 745,720 775,790 790,830 800,890 830,930 850,1000 860,1080 890,1130 892,1200'], ['nw', '685,900 690,1030 720,1060 725,1110 790,1140'], ['nw', '1210,770 1235,735 1310,722 1340,770 1392,830'], ['nw', '1250,640 1290,680 1335,715'], ['nw', '1120,450 1130,400 1125,355'],
    ['ne', '55,24 70,90 110,150 145,190 165,260 210,320 300,350'], ['ne', '620,100 520,160 520,190 470,240 510,280 480,310 450,370'], ['ne', '420,400 360,440 330,500'], ['ne', '1020,110 1080,180 1150,215 1311,218'], ['ne', '750,720 690,780 600,850 560,900'], ['ne', '1063,830 1070,890 1110,960 1180,1050 1250,1090'], ['ne', '0,1000 50,880 80,850'], ['ne', '370,1000 400,1070 320,1110 280,1140 160,1160'],
    ['sw', '510,240 520,280 550,320 580,390'], ['sw', '605,440 620,520 630,640 680,700 690,830 730,920'], ['sw', '320,810 410,850 480,930 500,1000 560,1080'], ['sw', '860,880 890,960 930,1060 915,1130'], ['sw', '690,1000 740,1060 720,1130'], ['sw', '850,170 900,135 980,130 1060,140'], ['sw', '1200,330 1240,370 1220,480'], ['sw', '1392,740 1330,830 1310,910'], ['sw', '740,400 770,330 830,290'], ['sw', '800,490 830,400 890,350'],
    ['se', '130,30 200,80 260,65 390,75 390,270 420,300 500,300 530,340 600,360 640,420 660,480 690,600 720,650 780,690'], ['se', '90,430 150,500 200,560'], ['se', '200,620 320,690 360,740 460,750 560,870'], ['se', '0,800 60,790 180,830 330,820 390,800'], ['se', '840,30 800,150 780,210 690,260 680,350 650,400'], ['se', '998,570 950,650 945,760 950,950 890,960'], ['se', '235,1170 250,1110 400,1110 450,1130 600,1170'], ['se', '170,790 60,950 30,1050']].forEach(([t, l]) => { s += stroke(t, l, '#a9d2f5', 3); });
  let seed = 7;
  const rnd = () => (seed = seed * 16807 % 2147483647) / 2147483647;
  for (let i = 0; i < 170; i++) {
    const x = Math.round(80 + rnd() * 2600), y = Math.round(40 + rnd() * 2300), k = Math.round(4 + rnd() * 7);
    s += `<path d="M${x} ${y}l${k} ${-k}l2 ${k * 2}z" fill="${w}"/>`;
  }

  // Minor roads
  [['nw', '600,24 600,490'], ['nw', '448,100 448,186 365,186 352,320'], ['nw', '260,261 352,261'], ['nw', '215,334 340,334 340,490'], ['nw', '352,298 400,298 420,319 600,319'], ['nw', '600,216 680,216 700,200 750,197'], ['nw', '750,189 860,189'], ['nw', '825,170 825,116 880,116 965,122 965,24'], ['nw', '750,297 960,297 1000,290 1068,288'], ['nw', '748,340 748,450 730,480'], ['nw', '220,472 290,490 600,492'], ['nw', '328,490 328,643 382,643 382,730'], ['nw', '1090,245 1165,247 1165,350 1190,350'], ['nw', '930,499 1048,499 1048,470 1140,470 1160,480 1200,480'], ['nw', '823,500 823,648'], ['nw', '1048,650 1048,800'], ['nw', '920,890 1048,890'], ['nw', '480,690 510,680 540,620 606,645'], ['nw', '480,700 490,760 485,795'], ['nw', '500,700 540,720 530,690 560,710'], ['nw', '130,990 195,990 195,1005'], ['nw', '60,660 110,670 130,685'], ['nw', '890,1020 890,1200'], ['nw', '590,1155 660,1155'],
    ['ne', '410,50 362,50 358,200'], ['ne', '406,24 400,350 370,430'], ['ne', '157,345 157,490 185,540 200,660'], ['ne', '0,490 150,490'], ['ne', '125,590 190,570 240,600 265,640 230,630 205,590 290,550'], ['ne', '130,600 140,640 185,630'], ['ne', '50,680 50,760'], ['ne', '530,282 650,282 715,298'], ['ne', '710,190 660,280 630,350 628,400'], ['ne', '720,425 720,355 790,355 790,388 825,388'], ['ne', '998,240 998,190 1030,110 1028,60'], ['ne', '335,640 340,740'], ['ne', '350,858 440,858'], ['ne', '775,835 775,925 935,927'], ['ne', '937,825 935,1090'], ['ne', '1085,810 1160,820 1165,920 1190,920 1190,860 1311,890'], ['ne', '1120,730 1311,732'], ['ne', '540,1110 600,1110 600,1160'], ['ne', '0,760 30,760'],
    ['se', '790,100 930,103'], ['se', '730,310 730,250 810,240'], ['se', '700,480 700,430 755,430'], ['se', '645,835 650,800 735,800'], ['se', '680,840 735,845 735,905'], ['se', '560,835 570,800 510,785'], ['se', '980,660 1230,662'], ['se', '1085,665 1165,670 1165,710 1095,705 1085,665'], ['se', '1100,670 1100,700'], ['se', '1120,670 1120,705'], ['se', '1140,670 1140,705'], ['se', '930,783 1165,778 1165,1030 1020,1025'], ['se', '1020,970 1311,973'], ['sw', '228,245 280,245'], ['sw', '230,260 278,270'], ['sw', '290,80 380,95 385,130 290,130 300,90'], ['sw', '320,80 325,130'], ['sw', '350,85 350,130']].forEach(([t, l]) => { s += stroke(t, l, '#f5f4f0', 3.5); });
  s += stroke('nw', '165,24 110,280 60,470', '#d6d6d6', 2) + stroke('ne', '795,24 700,260 615,480 600,570 560,640 530,840 390,960 330,1160', '#d3d3da', 2) + stroke('se', '320,24 280,160 240,330 265,450 170,580', '#cbcbd6', 2);

  // Local roads
  [['nw', '232,106 443,109 450,92 522,88 530,72 606,70 610,38 750,37', 6], ['nw', '751,24 748,310', 7], ['nw', '1207,24 1205,350 1198,490', 6], ['nw', '60,352 140,352', 5], ['nw', '598,492 600,360 612,345 710,342', 7], ['nw', '608,594 608,795', 6], ['nw', '60,795 470,797', 7], ['nw', '585,799 980,803 1046,815 1048,940 1045,1080 1057,1130 1055,1260', 8], ['nw', '60,946 585,950', 7], ['nw', '285,797 283,1255', 8], ['nw', '60,1098 380,1101 395,1092 478,1090 484,1065 585,1066', 6], ['nw', '231,1100 231,1145 145,1200 135,1240', 6], ['nw', '585,870 585,1200', 6], ['nw', '1198,490 1280,620 1345,630 1350,665 1392,667', 7], ['nw', '1292,1110 1290,1145 1250,1190', 6],
    ['ne', '0,667 195,678 190,850 165,882 200,930 240,1020 260,1040', 6], ['ne', '445,205 540,218 650,225 745,242 920,245 1000,230 1080,232 1110,250', 7], ['ne', '767,24 765,80 730,190 640,430 600,500 560,610 510,700', 9], ['ne', '1030,24 1050,47 1150,50 1311,60', 7], ['ne', '680,585 760,588 800,578 960,580', 7], ['ne', '820,580 812,690', 6], ['ne', '440,780 345,870 300,940 270,1000 245,1140 235,1320', 8], ['ne', '500,1175 530,1150 620,1060 630,1010 672,990 680,835 710,825 800,820', 7], ['ne', '1311,455 1270,455', 5], ['ne', '1311,940 1200,942 1190,1080', 5], ['ne', '825,1200 830,1160 865,1092 960,1093 1100,1117 1140,1105', 6], ['ne', '1311,690 1308,930', 5], ['ne', '1122,500 1160,502 1180,490', 5],
    ['sw', '60,208 735,212 770,245 830,258 1000,264 1080,280 1205,284 1240,262 1320,260', 8], ['sw', '130,208 130,315 148,370 125,510', 6], ['sw', '60,362 110,362 140,374 190,362 580,363', 7], ['sw', '282,0 280,700 275,750 280,850 275,1206', 7], ['sw', '432,208 432,700 440,800 430,1206', 7], ['sw', '60,513 585,515 650,502 700,515 1030,520 1080,545 1120,580 1200,582 1270,555 1385,540', 9], ['sw', '60,742 300,745 585,747 850,749 900,780 920,820 960,890 1000,950 1030,980 1225,980', 8], ['sw', '60,887 150,889 200,898 580,899', 6], ['sw', '135,745 148,780 145,830 115,930 105,980 105,1206', 6], ['sw', '60,1010 100,970 275,973', 6], ['sw', '60,1112 130,1125 275,1126', 6], ['sw', '345,1206 390,1170 490,1167 540,1130 590,1125 700,1050 760,1010 830,1000', 6], ['sw', '585,-330 585,1040', 8], ['sw', '683,55 690,80 730,105 780,95 797,115 795,300 800,350 700,470 670,530 630,575 585,575', 8], ['sw', '800,340 850,370 930,365 985,385 1000,340 1040,310 1050,70', 8], ['sw', '885,264 925,320 925,400 885,480 890,570 920,640 920,700 880,770', 8], ['sw', '985,385 1035,420 1035,460 1010,510 1040,580 1045,800 1080,880 1078,980 1040,1040 1040,1206', 8], ['sw', '1260,-40 1215,20 1210,90 1150,200 1172,270 1175,340 1192,420 1195,500 1183,590 1193,750', 8], ['sw', '705,475 735,490 737,765 790,820 810,860 812,930 885,1040 888,1206', 7], ['sw', '795,825 900,825 940,810', 6], ['sw', '850,749 880,690 910,675 1190,676', 7], ['sw', '690,1000 730,1100 760,1130 1050,1132 1100,1115 1170,1130 1220,1117 1280,1135 1392,1135', 7], ['sw', '1392,880 1350,990 1310,1110 1260,1206', 8],
    ['se', '390,0 350,50 348,130 310,165', 7], ['se', '358,205 380,310 370,400 370,480 370,580', 8], ['se', '0,545 30,540 45,500 70,465 240,464 280,475 365,478', 9], ['se', '185,500 300,555 360,605 390,610 440,660', 8], ['se', '475,610 490,587 570,587 660,625 665,680 690,732 760,735 910,730', 8], ['se', '495,24 495,158 565,160', 6], ['se', '755,24 745,95 690,100 570,190 565,235', 7], ['se', '90,705 240,707 290,755 295,830 265,960 270,1060', 7], ['se', '90,590 70,690 0,800', 6], ['se', '0,840 0,900', 6], ['se', '265,968 460,970 465,927 560,930', 6], ['se', '265,1043 275,1080 320,1105 340,1160 375,1206', 6], ['se', '0,1135 100,1135', 5], ['se', '703,735 703,800', 6], ['se', '905,400 910,350 940,338 1300,347 1311,343', 8], ['se', '1150,24 1190,340', 6], ['se', '1278,347 1262,520', 6], ['se', '820,470 818,560 808,600 810,700', 6], ['se', '890,735 930,790 935,860 1010,900 1025,1010 1060,1080 1070,1166', 7], ['se', '1237,520 1235,700 1285,730 1300,800 1300,1100 1255,1150', 7], ['se', '25,980 25,1050 0,1120', 5], ['se', '130,275 240,272', 6], ['se', '105,980 102,1150 120,1206', 5]].forEach(([t, l, k]) => {
    s += stroke(t, l, '#fff', k);
  });

  // Highways
  const hw = [['nw', '245,24 240,70 185,240 142,350 138,500 130,940 115,1000 60,1130', 9], ['ne', '458,24 440,160 430,420 418,650 405,700 380,745 250,860 130,980 90,1040 75,1110 55,1200 20,1350 10,1500 8,1700 -10,1780 -50,1900 -105,2100 -170,2190 -310,2420', 11], ['ne', '1311,122 1110,275 780,515 540,680 470,745 430,770 385,768', 9],
    ['sw', '60,53 430,55 500,60 700,53 900,53 1200,65 1540,75 1590,90 1640,130 1720,190 1900,245 2200,355 2350,425 2510,505 2703,523', 9], ['se', '243,130 248,230 240,350 190,490 100,590 0,665', 9], ['sw', '170,1206 380,1115 585,1030 800,940 1330,705 1392,665', 13]];
  hw.forEach(([t, l, k]) => { s += stroke(t, l, '#efc364', k + 4); });
  hw.forEach(([t, l, k]) => { s += stroke(t, l, '#ffe69a', k); });
  s += stroke('sw', '170,1206 585,1030 800,940 1330,705 1392,665', '#efc364', 2);

  // Road tags
  const boxes = { nw: '127@597,153 98@443,186 171@825,177 129@662,216 91@262,261 170@837,297 90@352,324 92@469,318 2478@748,327 87@338,414 126@750,414 88@508,492 125@687,495 125@1113,474 86@328,567 84@382,675 166@1049,726 1461@895,804 203@1366,561 858@675,1131 3@67,486 168@753,20',
    ne: '286@380,51 419@1025,126 455@1283,56 364@531,282 281@143,342 282@276,345 206@80,489 202@48,762 340@699,759 339@537,792 278@447,858 412@882,822 410@756,879 341@813,927 413@1023,627 471@1214,732 469@1230,888 409@933,1005 2933@596,1080 336@600,1167 331@423,1173 1827@806,1215 414@1197,381',
    sw: '2478@586,147', se: '408@944,105 405@780,255 546@390,567 546@468,645 324@694,801 318@734,852 325@682,891 546@932,798 398@1011,783 447@1170,885 392@1113,969 728@1109,1029 444@1212,1083 982@1243,1163' };
  const ovals = { nw: '289@142,468', ne: '121@1127,267 121@773,522 121@448,759 5@641,432 5@328,888', sw: '399@1270,729', se: '5@209,435' };
  const us = { nw: '', ne: '75@448,104 75@356,775', sw: '380@433,56 380@805,54 380@1321,72 75@1348,695 75@1177,1043 380@58,53', se: '75@22,177 380@533,256 380@964,437' };
  const each = (set, fn) => Object.keys(set).forEach(t => set[t].split(' ').filter(Boolean).forEach(v => {
    const [n, p] = v.split('@'), [x, y] = p.split(',').map(Number);
    s += fn(n, x + tile[t][0], y + tile[t][1]) + text(x + tile[t][0], y + tile[t][1], n, 'middle', 'road-tag', 27);
  }));
  each(boxes, (n, x, y) => { const k = n.length * 15.5 + 17; return `<rect x="${x - k / 2}" y="${y - 16}" width="${k}" height="32" fill="#fff" stroke="#555" stroke-width="3"/>`; });
  each(ovals, (n, x, y) => { const k = Math.max(48, n.length * 14 + 18); return `<rect x="${x - k / 2}" y="${y - 19}" width="${k}" height="38" rx="19" fill="#fff" stroke="#555" stroke-width="2.5"/>`; });
  each(us, (n, x, y) => {
    const k = n.length === 2 ? 26 : 30;
    return `<path d="M${x - k + 3} ${y - 21}q${k / 3} 5 ${k * .45} 0q${k * .45} -5 ${k * .9} 0q${k * .3} 5 ${k * .45} 0l6 7q-6 9 0 15q4 14 -9 18q-${k * .55} 0 -${k - 9} 5q-${k * .45} -5 -${k - 9} -5q-13 -4 -9 -18q6 -6 0 -15z" fill="#fff" stroke="#555" stroke-width="2.5"/>`;
  });

  // Place names
  const place = (t, x, y, n, anchor = 'middle', cls = '') => { s += text(x + tile[t][0], y + tile[t][1], n, anchor, 'place ' + cls, 37); };
  place('nw', 190, 211, 'Celina'); place('ne', 593, 553, 'Melissa'); place('sw', 1406, 268, 'McKinney'); place('se', 657, 145, 'New Hope');
  place('se', 1162, 457, 'Princeton', 'start'); place('se', 78, 688, 'Fairview'); place('se', 814, 700, 'Lowry'); place('se', 815, 740, 'Crossing');
  place('se', 130, 1192, 'Celebration', 'middle', 'park'); place('ne', 1265, 928, 'Altoga', 'start');
  place('sw', 403, 404, 'Karya Siddhi', 'end', 'poi'); place('sw', 403, 445, 'Hanuman Temple', 'end', 'poi');
  s += '<path d="M439 1664q-6-22-18-32a28 28 0 1 1 36 0q-12 10-18 32z" fill="#6f93ae" stroke="#fff" stroke-width="2"/><path d="M428 1601q10-5 9 4q-1 4-6 4q8 0 7 7q-3 8-13 3M438 1609q8-7 14 0q3 9-6 9M442 1598q6 4 11-2" fill="none" stroke="#fff" stroke-width="2.5"/><circle cx="449" cy="1594" r="2" fill="#fff"/>';
  const toll = (x, y, a) => { s += `<text transform="translate(${x} ${y}) rotate(${a})" text-anchor="middle" class="place toll" y="10">Sam Rayburn Tollway</text>`; };
  toll(520, 2256, -22.5); toll(1075, 2022, -22.5);

  // Market boundary
  const north = [...pts('nw', '399,564 535,566 536,594 606,594 600,492 930,497 961,436 966,400 958,396 960,370 982,375 998,357 1022,370 1046,370 1046,392 1060,412 1075,414 1070,428 1086,444 1115,450 1146,485 1160,487 1163,515 1160,537 1172,544 1178,568 1205,580 1222,600 1243,612 1244,627 1286,627 1276,612 1258,610 1232,552 1198,505 1206,350 1221,348 1221,198 1263,198 1265,213'),
    ...pts('ne', '39,215 39,340 298,345 300,370 312,378 306,392 318,404 303,410 284,432 298,440 290,455 304,470 295,482 310,495 308,510 323,520 305,545 314,560 303,572 312,585 300,600 312,612 304,628 312,640 297,645 303,662 297,668 307,685 290,695 285,710 255,728 272,742 250,755 262,768 248,775 262,785 247,800 262,825 272,852 150,968 158,985 185,988 195,994 203,988 273,990 275,1017 301,1017 318,1048 338,1055 325,1073 345,1078 361,1077 387,998 468,915 472,932 480,920 515,912 530,920 560,900 541,852 553,830 545,806 560,787 628,786 628,713 730,717 735,725 752,718 763,690 763,649 780,649 791,687 813,687 811,800 796,818 1063,825 1117,757 1117,730 1103,728 1103,712 1056,702 1056,645 1022,643 1022,620 976,620 973,588 960,580 988,553 990,505 996,497 1122,499 1123,618 1165,620 1178,622 1200,615 1215,625 1260,627 1290,675 1320,695 1320,1090 1280,1090 1244,1078 1215,1086 1160,1086 1143,1100'),
    ...pts('se', '1138,12 1070,12 1066,26 1050,26 1048,129 948,127 948,177 927,177 927,212 955,214 955,258 893,258 890,287 867,287 866,341 828,341 809,333 810,425 829,455 830,469 852,469 852,448 887,448 880,494 905,496 906,533 935,533 934,657 985,659 985,717 915,716 915,735 870,728 868,735 797,725 812,745 843,757 840,780 848,800 838,820 850,835 865,840 862,855 870,865 865,885 885,893 908,920 880,943 893,950 887,965 870,985 880,1007 890,1007 917,1040 928,1115 945,1140 945,1166')];
  const south = [...pts('se', '945,1166 910,1133 873,1130 818,1093 818,1068 800,1060 795,1050 812,1042 805,1033 790,1048 775,1040 778,1025 765,1020 770,1003 745,1008 728,990 733,970 722,955 700,945 690,935 670,940 655,928 640,930 630,912 610,897 590,903 578,900 575,880 560,874 550,893 593,970 559,971 558,1043 458,1041 456,1027 408,1025 408,1049 330,1048 328,1040 267,1043 256,992 170,985 0,982'), ...pts('sw', '1225,982 1285,900 1345,690 585,1027')];
  const west = pts('sw', '585,1027 580,1000 583,518 557,519 583,517 585,410 577,410 572,402 510,402 508,440 280,435 282,51 585,52 585,-402 472,-403 474,-468 409,-468 416,-545 402,-592 399,-636');
  s += `<path d="M${[...north, ...south, ...west].join('L')}Z" fill="#3f51b5" fill-opacity=".105"/>`;
  s += `<path d="M${south.join('L')}L590 2260L582 2290V2406H2337z" fill="#000" fill-opacity=".06"/>`;
  s += `<path d="M${north.join('L')}M${west.join('L')}" fill="none" stroke="#3f51b5" stroke-width="3.5"/><path d="M${south.join('L')}" fill="none" stroke="#74778f" stroke-width="3.5"/><path d="M585 2227L592 2250L582 2290V2406" fill="none" stroke="#888" stroke-width="3"/>`;

  // Listings
  const purple = { nw: '1240,466 1246,490 961,646 1018,670 1144,769 1051,862 940,1051 649,1174 637,1180 1039,1159 1024,1171 1369,1129', ne: '64,922 457,1147',
    sw: '1324,7 463,166 475,172 490,175 484,180 493,190 508,169 457,232 613,175 538,349 613,442 631,739 865,607 868,688 844,700 922,703 973,763 1006,748 1003,752 1024,520 1024,532 1135,610 1276,607 1267,466 1357,136 1315,160 1354,292 1372,319 1384,319 709,868 706,883 715,880 760,871 781,874 778,880 772,892 787,898 1378,955 1396,913',
    se: '133,97 145,100 127,109 154,148 157,151 175,148 184,145 187,157 148,172 145,190 178,174 187,178 196,184 166,184 175,193 184,202 178,214 193,211 199,220 196,226 187,229 178,229 166,226 157,232 223,232 118,250 121,256 133,259 169,262 160,271 160,286 112,280 100,295 196,280 193,283 217,277 178,301 199,301 163,313 229,307 229,334 139,331 139,337 115,337 118,370 214,403 13,337 97,460 103,469 34,508 18,175 346,655 106,721 7,913 274,916 901,592 904,628' };
  const blue = { nw: '1324,643 1366,1117 1321,1147 1235,1189', ne: '', sw: '1232,10 1225,19 337,67 439,145 700,139 697,154 1021,154 403,226 385,271 382,286 376,289 292,298 298,313 310,319 499,328 535,340 532,352 493,400 595,412 706,478 898,478 913,484 895,499 1138,400 1231,181 1246,181 1261,226 958,589 928,625 1015,646 1141,652 670,622 796,685 904,694 829,751 835,763 832,769 850,769 985,751 1000,817 1378,814', se: '91,118 205,160 205,169 190,172 166,196 130,202 133,199 151,247 109,241 109,256 178,259 160,260 97,283 202,370 730,793 739,796 736,802' };
  const dots = (set, fill, rim) => Object.keys(set).forEach(t => set[t].split(' ').filter(Boolean).forEach(p => {
    const [x, y] = p.split(',').map(Number);
    s += `<circle cx="${x + tile[t][0]}" cy="${y + tile[t][1]}" r="7.3" fill="${fill}" stroke="${rim}" stroke-width="1"/>`;
  }));
  dots(blue, '#039be5', '#0288d1'); dots(purple, '#9c27b0', '#7b1fa2'); dots({ sw: '1147,415' }, '#00bf9a', '#00a080');

  // Legal line and logo
  s += '<rect x="2232" y="2365" width="471" height="41" fill="#f5f5f5" fill-opacity=".75"/><path d="M2492 2365v41" stroke="#ddd" stroke-width="3"/>' +
    text(2248, 2384, 'Map data ©2020', 'start', 'legal', 30) + text(2508, 2384, 'Terms of Use', 'start', 'legal', 30) +
    '<text x="78" y="2384" class="google" textLength="187">Google</text>';

  // Controls
  s += `<g transform="translate(1392 0)"><g fill="#000" fill-opacity=".1"><rect x="1159" y="57" width="124" height="122" rx="8"/><rect x="1177" y="207" width="94" height="350" rx="8"/><rect x="1159" y="1097" width="124" height="244" rx="8"/></g>
    <g fill="#fff"><rect x="1161" y="54" width="120" height="120" rx="6"/><rect x="1179" y="204" width="90" height="348" rx="6"/><rect x="1161" y="1095" width="120" height="243" rx="6"/></g>
    <path d="M1197 105V90h16M1230 90h15v15M1245 123v15h-15M1213 138h-16v-15" fill="none" stroke="#666" stroke-width="7"/>
    <path d="M1194 1155h54M1221 1128v54M1194 1278h54" stroke="#666" stroke-width="11"/><path d="M1176 1216h90" stroke="#e5e5e5" stroke-width="3"/>
    <g fill="#b3b3b3"><circle cx="1208" cy="231" r="6"/><circle cx="1225" cy="231" r="6"/><circle cx="1242" cy="231" r="6"/></g>
    <path d="M1191 259h66M1191 352h66M1191 445h66" stroke="#d8d8d8" stroke-width="3"/>
    <circle cx="1224" cy="306" r="33" fill="#9c27b0"/><circle cx="1224" cy="399" r="33" fill="#03a0fa"/><circle cx="1224" cy="492" r="33" fill="#00bf9f"/>
    <g fill="none" stroke="#fff" stroke-width="2.500"><path d="M1200 307l24-22 24 22M1206 303v24h36v-24M1212 327v-23l12-9 12 9v23"/><path d="M1217 325v-8q7-7 14 0v8z"/><circle cx="1224" cy="307" r="4"/>
    <path d="M1210 390v-14h27v45h-27v-11M1205 395h12v11h-12zM1219 400h7M1208 395v-4h6v4"/><path d="M1230 396v7"/>
    <path d="M1203 492v-11q0-5 5-5h14q4 0 4 5v9M1200 490q4-2 6 5h16q2-7 6-5v16h-28zM1204 506v5M1224 506v5M1229 490q0-17 8-17t8 17zM1237 490v20M1231 511h12"/></g></g>`;
  $('#map').innerHTML = s;
})();
```
